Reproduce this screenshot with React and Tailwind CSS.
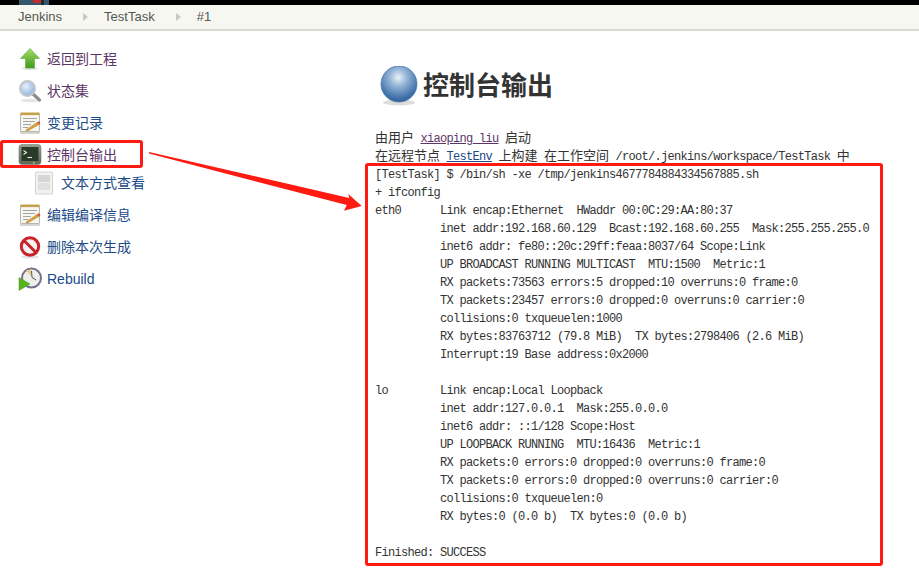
import React from 'react';

const Zh = ({ children }) => (
  <span className="text-[13px] tracking-normal">{children}</span>
);

// job console text, the ifconfig part
const consoleLines = [
  '[TestTask] $ /bin/sh -xe /tmp/jenkins4677784884334567885.sh',
  '+ ifconfig',
  'eth0      Link encap:Ethernet  HWaddr 00:0C:29:AA:80:37',
  '          inet addr:192.168.60.129  Bcast:192.168.60.255  Mask:255.255.255.0',
  '          inet6 addr: fe80::20c:29ff:feaa:8037/64 Scope:Link',
  '          UP BROADCAST RUNNING MULTICAST  MTU:1500  Metric:1',
  '          RX packets:73563 errors:5 dropped:10 overruns:0 frame:0',
  '          TX packets:23457 errors:0 dropped:0 overruns:0 carrier:0',
  '          collisions:0 txqueuelen:1000',
  '          RX bytes:83763712 (79.8 MiB)  TX bytes:2798406 (2.6 MiB)',
  '          Interrupt:19 Base address:0x2000',
  ' ',
  'lo        Link encap:Local Loopback',
  '          inet addr:127.0.0.1  Mask:255.0.0.0',
  '          inet6 addr: ::1/128 Scope:Host',
  '          UP LOOPBACK RUNNING  MTU:16436  Metric:1',
  '          RX packets:0 errors:0 dropped:0 overruns:0 frame:0',
  '          TX packets:0 errors:0 dropped:0 overruns:0 carrier:0',
  '          collisions:0 txqueuelen:0',
  '          RX bytes:0 (0.0 b)  TX bytes:0 (0.0 b)',
  ' ',
  'Finished: SUCCESS',
];

const UpIcon = () => (
  <svg width="24" height="24" viewBox="0 0 24 24">
    <defs>
      <linearGradient id="upG" x1="0" y1="0" x2="0" y2="1">
        <stop offset="0" stopColor="#a6dc6a" />
        <stop offset="1" stopColor="#3f9a1c" />
      </linearGradient>
    </defs>
    <ellipse cx="12" cy="21.5" rx="8" ry="1.5" fill="#ddd" />
    <path d="M12 1.5 L21.5 11.5 H16.5 V21 H7.5 V11.5 H2.5 Z" fill="url(#upG)" stroke="#5aa832" strokeWidth="0.6" />
  </svg>
);

const SearchIcon = () => (
  <svg width="24" height="24" viewBox="0 0 24 24">
    <defs>
      <radialGradient id="lensG" cx="0.4" cy="0.35" r="0.8">
        <stop offset="0" stopColor="#e6f0fb" />
        <stop offset="1" stopColor="#7ea8dc" />
      </radialGradient>
    </defs>
    <ellipse cx="12" cy="21.5" rx="9" ry="1.8" fill="#e6e6e6" />
    <path d="M15 15 L21.5 21" stroke="#8a8f8a" strokeWidth="3.2" strokeLinecap="round" />
    <circle cx="9.5" cy="9.5" r="7.5" fill="url(#lensG)" stroke="#c3c7cc" strokeWidth="2" />
  </svg>
);

const NoteIcon = () => (
  <svg width="24" height="24" viewBox="0 0 24 24">
    <rect x="2" y="3" width="20" height="20" rx="1.5" fill="#d5d5cf" />
    <rect x="2.5" y="2.5" width="19" height="18" rx="1" fill="#f6f6f2" stroke="#a9a99f" strokeWidth="0.8" />
    <rect x="2.5" y="1.5" width="19" height="2.6" fill="#c2a14a" />
    <path d="M5 7.5H19M5 10.5H17M5 13.5H13M5 16.5H10" stroke="#a5a59d" strokeWidth="1" />
    <path d="M8.5 18.5 L19 11.5 L21 13.5 L10.5 19.5 L8 20 Z" fill="#dfa13a" stroke="#9d6f1f" strokeWidth="0.4" />
    <path d="M19 11.5 L21 13.5 L22.5 12 L20.5 10.3 Z" fill="#d94c3a" />
  </svg>
);

const TerminalIcon = () => (
  <svg width="24" height="24" viewBox="0 0 24 24">
    <defs>
      <linearGradient id="termG" x1="0" y1="0" x2="0" y2="1">
        <stop offset="0" stopColor="#9aa08e" />
        <stop offset="1" stopColor="#5d6553" />
      </linearGradient>
    </defs>
    <rect x="1" y="1.5" width="22" height="20" rx="3" fill="url(#termG)" stroke="#777c70" strokeWidth="0.6" />
    <rect x="3.5" y="4" width="17" height="14" fill="#2a3a28" />
    <path d="M5.5 7.5 L8.5 9.5 L5.5 11.5" stroke="#e8efe0" strokeWidth="1.1" fill="none" />
    <path d="M9.5 14.5H14" stroke="#e8efe0" strokeWidth="1.1" />
    <rect x="15" y="19.3" width="1.6" height="1.2" fill="#c6e07e" />
  </svg>
);

const PageIcon = () => (
  <svg width="24" height="24" viewBox="0 0 24 24">
    <rect x="3.5" y="1" width="17" height="22" rx="1" fill="#f2f2f0" stroke="#c9c9c6" strokeWidth="0.8" />
    <rect x="6" y="4" width="12" height="7" fill="#d6d6d4" />
    <rect x="6" y="12" width="12" height="7" fill="#e0e0de" />
  </svg>
);

const NoIcon = () => (
  <svg width="24" height="24" viewBox="0 0 24 24">
    <ellipse cx="12" cy="22" rx="9" ry="1.6" fill="#e4e4e4" />
    <circle cx="12" cy="11.5" r="8.7" fill="#f5f2f2" stroke="#c9222a" strokeWidth="3" />
    <path d="M6 5.5 L18 17.5" stroke="#c9222a" strokeWidth="3" />
  </svg>
);

const RebuildIcon = () => (
  <svg width="24" height="24" viewBox="0 0 24 24">
    <circle cx="13.5" cy="11" r="9.5" fill="#eeeeea" stroke="#77708f" strokeWidth="2" />
    <path d="M13.5 4 L14 10.5 L18 13" stroke="#555" strokeWidth="1" fill="none" />
    <path d="M8 3.5 L13 2.5 L13 9 Z" fill="#e6cf8a" />
    <path d="M1 10.5 L12 17 L1 23.5 Z" fill="#58b41e" stroke="#4a9a18" strokeWidth="0.5" />
  </svg>
);

const BallIcon = () => (
  <svg width="40" height="40" viewBox="0 0 40 40">
    <defs>
      <radialGradient id="ballG" cx="0.48" cy="0.32" r="0.72">
        <stop offset="0" stopColor="#eaf1f8" />
        <stop offset="0.35" stopColor="#92b3d6" />
        <stop offset="0.8" stopColor="#3f70a8" />
        <stop offset="1" stopColor="#2d5a92" />
      </radialGradient>
    </defs>
    <ellipse cx="19" cy="36.5" rx="16" ry="3" fill="#dcdcdc" />
    <circle cx="19" cy="18" r="18" fill="url(#ballG)" stroke="#4a7bb0" strokeWidth="0.8" />
  </svg>
);

const SideItem = ({ icon, label, color = 'text-[#204a87]' }) => (
  <a className={`flex items-center gap-[5px] h-8 pl-[18px] text-sm ${color}`}>
    <span className="w-6 h-6 shrink-0">{icon}</span>
    <span>{label}</span>
  </a>
);

const Crumb = () => (
  <span className="w-0 h-0 border-y-[4px] border-y-transparent border-l-[5px] border-l-[#c8c8c4]" />
);

export default function App() {
  return (
    <div
      className="relative w-[919px] h-[573px] overflow-hidden bg-white"
      style={{ fontFamily: '"Liberation Sans", "Noto Sans CJK SC", sans-serif' }}
    >
      {/* header strip, the logo is cut off */}
      <div className="h-[5px] bg-black pl-[18px] overflow-hidden">
        <svg width="34" height="5" viewBox="0 0 34 5" className="block">
          <rect x="1" width="30" height="5" fill="#35566b" />
          <rect x="15" width="8" height="3" fill="#c92a2a" />
          <rect x="23" width="3" height="5" fill="#1c2a33" />
        </svg>
      </div>

      {/* breadcrumb */}
      <div className="h-[26px] flex items-center pl-[18px] bg-[#f6f7f1] border-b-2 border-[#d8d9d2] text-[13px] text-[#555753]">
        <span>Jenkins</span>
        <span className="ml-[21px] mr-[16px] flex"><Crumb /></span>
        <span>TestTask</span>
        <span className="ml-[21px] mr-[16px] flex"><Crumb /></span>
        <span>#1</span>
      </div>

      <div className="flex">
        <div className="w-[375px] shrink-0 pt-3">
          <SideItem icon={<UpIcon />} label="返回到工程" color="text-[#5c3566]" />
          <SideItem icon={<SearchIcon />} label="状态集" color="text-[#5c3566]" />
          <SideItem icon={<NoteIcon />} label="变更记录" />
          <SideItem icon={<TerminalIcon />} label="控制台输出" color="text-[#5c3566]" />
          <a className="flex items-center gap-[5px] h-6 mb-1 pl-8 text-sm text-[#204a87]">
            <span className="w-6 h-6 shrink-0"><PageIcon /></span>
            <span>文本方式查看</span>
          </a>
          <SideItem icon={<NoteIcon />} label="编辑编译信息" />
          <SideItem icon={<NoIcon />} label="删除本次生成" />
          <SideItem icon={<RebuildIcon />} label="Rebuild" />
        </div>

        <div className="flex-1 pt-[35px]">
          <h1 className="flex items-center gap-[3px] ml-[5px] h-10 text-[26px] font-bold text-[#333]">
            <span className="w-10 h-10 shrink-0"><BallIcon /></span>
            <span>控制台输出</span>
          </h1>
          <div
            className="mt-6 text-xs leading-[18px] tracking-[-0.7px] text-[#333] whitespace-pre"
            style={{ fontFamily: '"Liberation Mono", "Noto Sans CJK SC", monospace' }}
          >
            <div className="h-[18px]">
              <Zh>由用户</Zh> <a className="underline text-[#5c3566]">xiaoping_liu</a> <Zh>启动</Zh>
            </div>
            <div className="h-[18px]">
              <Zh>在远程节点</Zh> <a className="underline text-[#204a87]">TestEnv</a> <Zh>上构建</Zh> <Zh>在工作空间</Zh> /root/.jenkins/workspace/TestTask <Zh>中</Zh>
            </div>
            {consoleLines.map((line, i) => (
              <div key={i} className="h-[18px]">{line}</div>
            ))}
          </div>
        </div>
      </div>

      {/* red annotations on top of the screenshot */}
      <div className="absolute left-0 top-[140px] w-[143px] h-[28px] border-[3px] border-[#ff1a12] rounded-[3px]" />
      <div className="absolute left-[365px] top-[163px] w-[518px] h-[403px] border-[3px] border-[#ff1a12] rounded-[3px]" />
      <svg className="absolute left-0 top-0" width="919" height="573">
        <polygon points="149,152 349.3,198 348.3,194 361.7,206 344,210.7 346.7,205 149,153.6" fill="#ff1a12" />
      </svg>
    </div>
  );
}
